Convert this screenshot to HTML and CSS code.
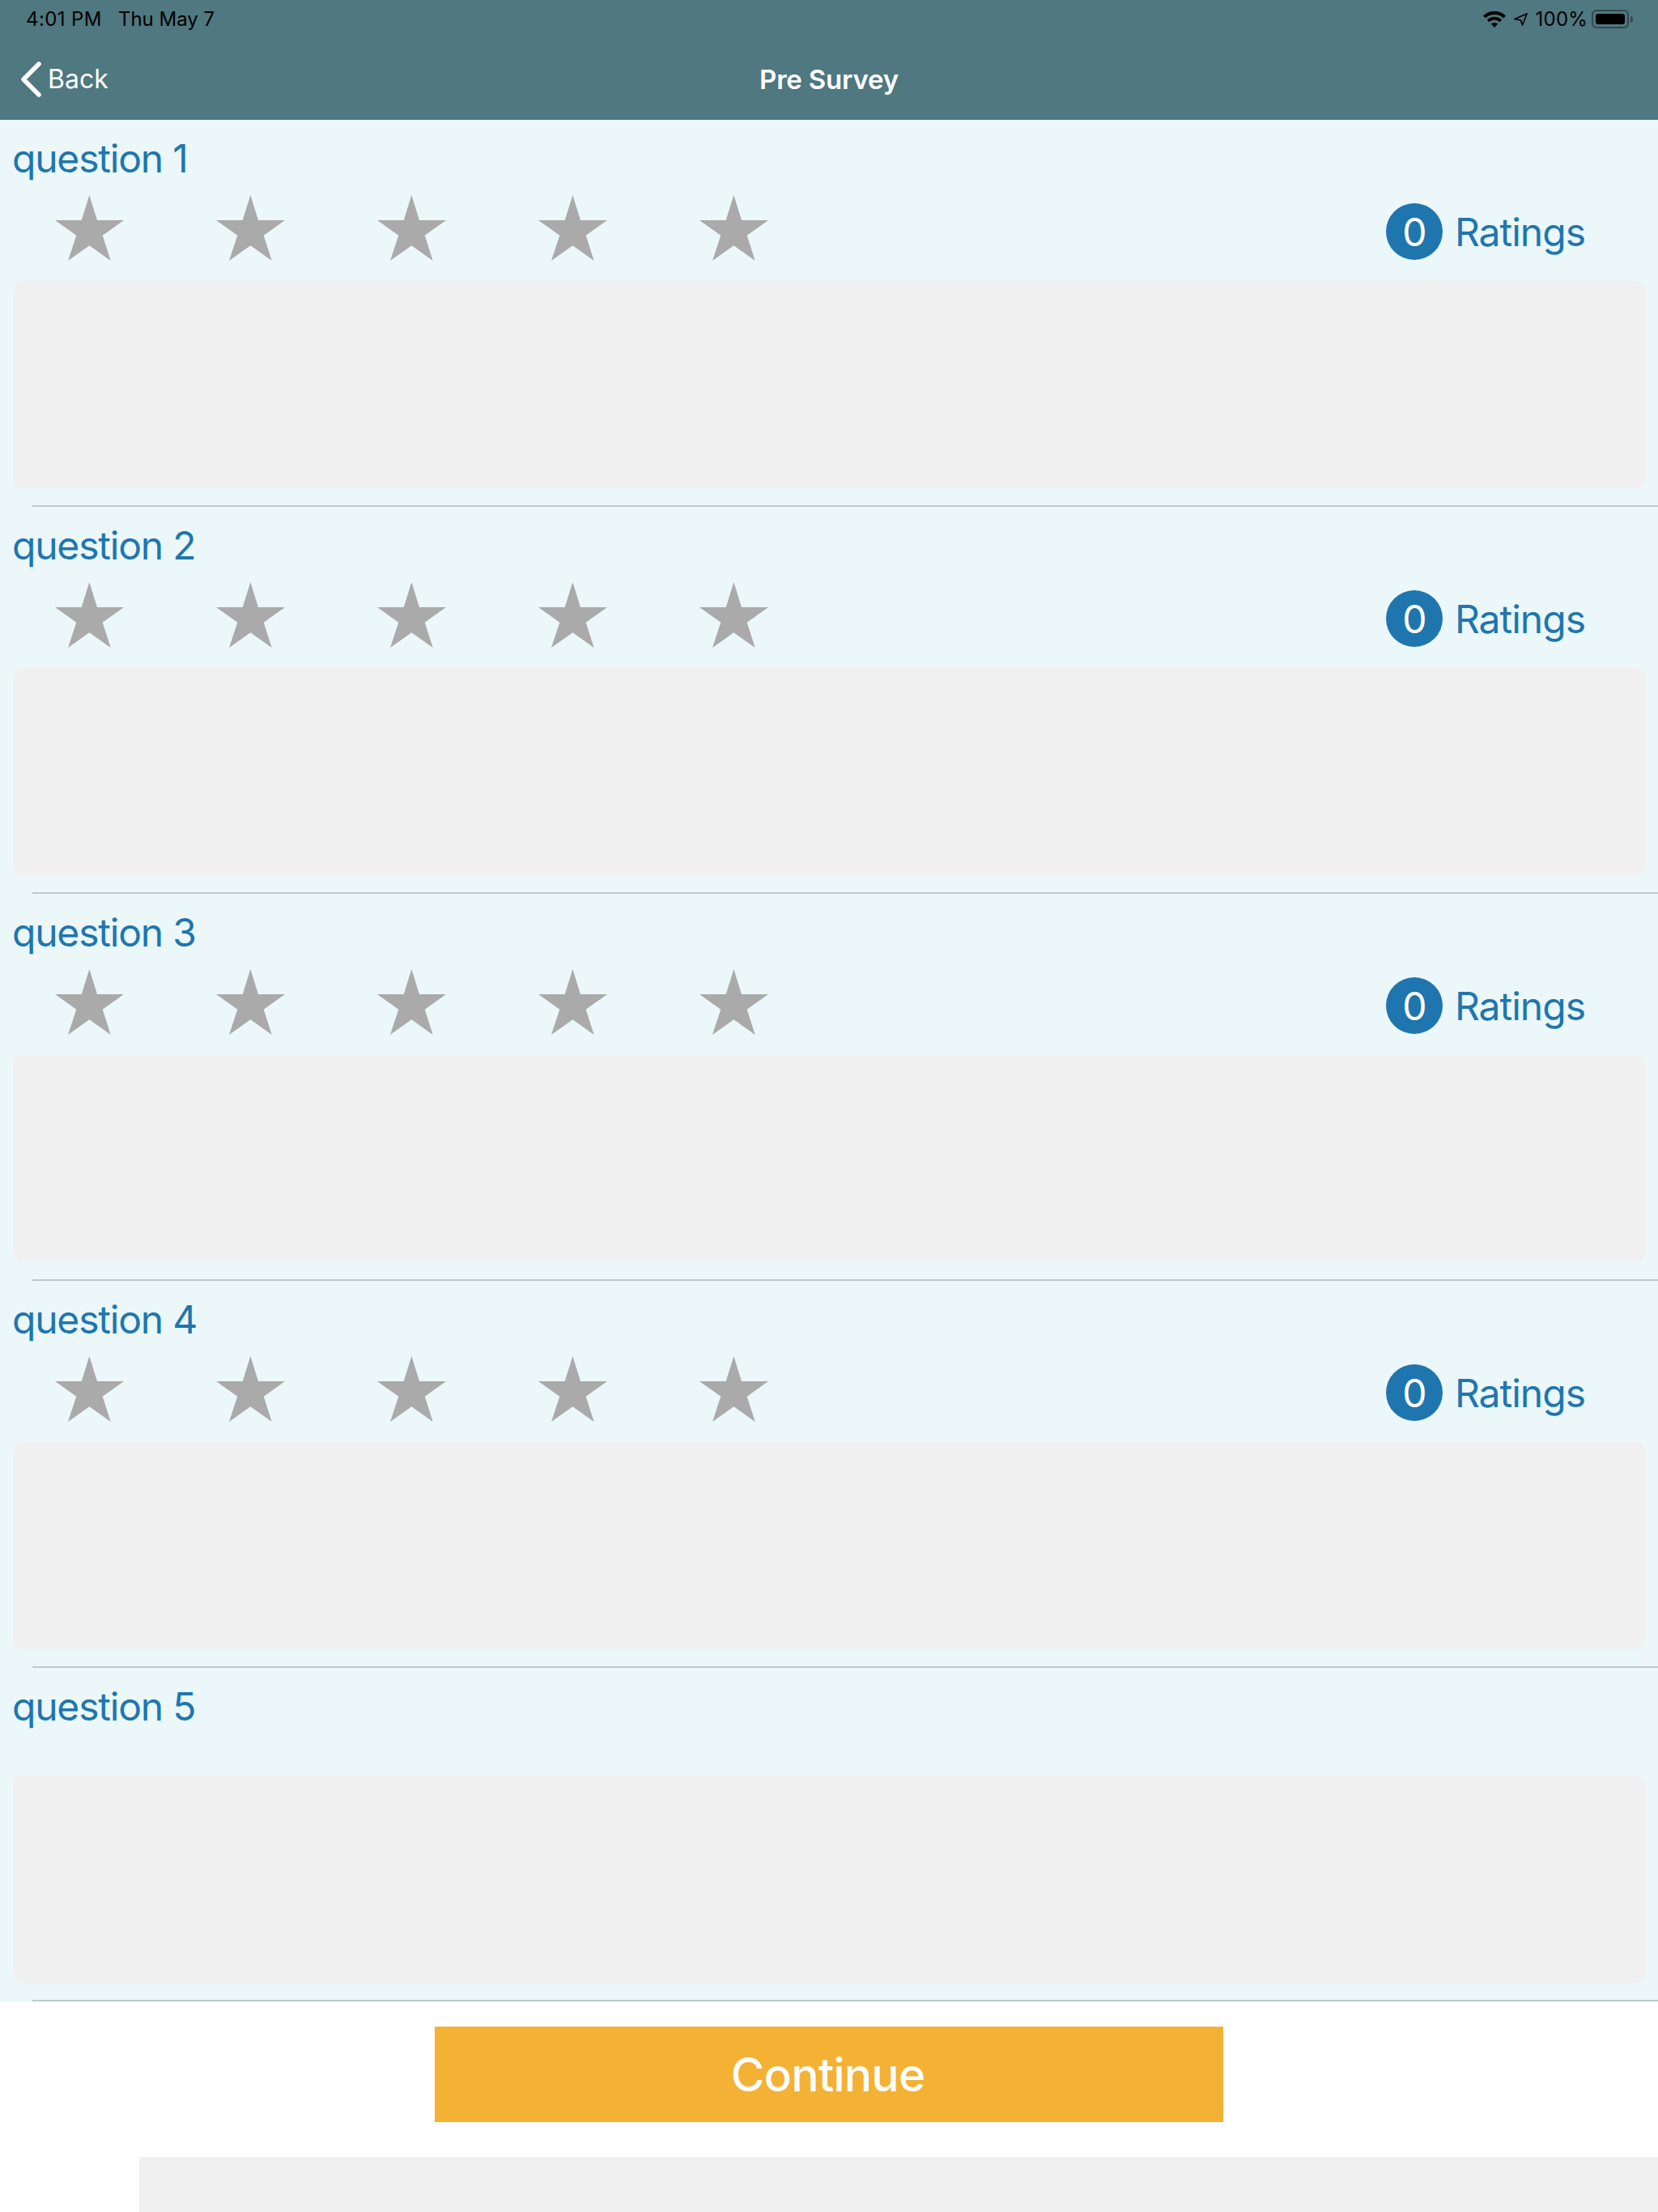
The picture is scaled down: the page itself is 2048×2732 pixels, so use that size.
FILE: index.html
```html
<!DOCTYPE html>
<html lang="en">

<head>
    <meta charset="UTF-8">
    <meta name="viewport" content="width=device-width, initial-scale=1.0">
    <title>Pre Survey</title>
    <link rel="stylesheet" href="styles.css">
</head>

<body>

    <svg class="sprites" width="0" height="0">
        <symbol id="star" viewBox="0 0 85 81">
            <polygon points="42.4,0 52,31 85,31 58.7,49.7 68.7,81 42.4,62.3 16,81 26.3,49.7 0,31 32.7,31"></polygon>
        </symbol>
    </svg>

    <header class="top-bar">
        <div class="status-bar">
            <div class="status-left">
                <span class="status-time">4:01 PM</span>
                <span>Thu May 7</span>
            </div>
            <div class="status-right">
                <svg class="wifi-icon" viewBox="0 0 28 20">
                    <path d="M14 20l-4.2-4.4a6 6 0 0 1 8.4 0z"></path>
                    <path d="M7.5 13.2l-2.6-2.7a13 13 0 0 1 18.2 0l-2.6 2.7a9.4 9.4 0 0 0-13 0z"></path>
                    <path d="M2.9 8.4L0 5.5a20 20 0 0 1 28 0l-2.900 2.900a16 16 0 0 0-22.200 0z"></path>
                </svg>
                <svg class="arrow-icon" viewBox="0 0 17 16">
                    <path d="M1 7.500L16 1l-5.500 14-2-6z"></path>
                </svg>
                <span class="battery-text">100%</span>
                <div class="battery">
                    <div class="battery-level"></div>
                </div>
                <div class="battery-nub"></div>
            </div>
        </div>
        <nav class="nav-bar">
            <a class="back-link">
                <svg class="back-icon" viewBox="0 0 26 44">
                    <path d="M23 3L4 22l19 19"></path>
                </svg>
                <span>Back</span>
            </a>
            <div class="nav-title">Pre Survey</div>
        </nav>
    </header>

    <main class="survey-list">
        <section class="question">
            <h2 class="question-title">question 1</h2>
            <div class="rating-row">
                <div class="stars">
                    <svg class="star"><use href="#star"></use></svg>
                    <svg class="star"><use href="#star"></use></svg>
                    <svg class="star"><use href="#star"></use></svg>
                    <svg class="star"><use href="#star"></use></svg>
                    <svg class="star"><use href="#star"></use></svg>
                </div>
                <div class="rating-count">
                    <span class="count-badge">0</span>
                    <span>Ratings</span>
                </div>
            </div>
            <div class="answer-box"></div>
        </section>
        <div class="divider"></div>

        <section class="question">
            <h2 class="question-title">question 2</h2>
            <div class="rating-row">
                <div class="stars">
                    <svg class="star"><use href="#star"></use></svg>
                    <svg class="star"><use href="#star"></use></svg>
                    <svg class="star"><use href="#star"></use></svg>
                    <svg class="star"><use href="#star"></use></svg>
                    <svg class="star"><use href="#star"></use></svg>
                </div>
                <div class="rating-count">
                    <span class="count-badge">0</span>
                    <span>Ratings</span>
                </div>
            </div>
            <div class="answer-box"></div>
        </section>
        <div class="divider"></div>

        <section class="question">
            <h2 class="question-title">question 3</h2>
            <div class="rating-row">
                <div class="stars">
                    <svg class="star"><use href="#star"></use></svg>
                    <svg class="star"><use href="#star"></use></svg>
                    <svg class="star"><use href="#star"></use></svg>
                    <svg class="star"><use href="#star"></use></svg>
                    <svg class="star"><use href="#star"></use></svg>
                </div>
                <div class="rating-count">
                    <span class="count-badge">0</span>
                    <span>Ratings</span>
                </div>
            </div>
            <div class="answer-box"></div>
        </section>
        <div class="divider"></div>

        <section class="question">
            <h2 class="question-title">question 4</h2>
            <div class="rating-row">
                <div class="stars">
                    <svg class="star"><use href="#star"></use></svg>
                    <svg class="star"><use href="#star"></use></svg>
                    <svg class="star"><use href="#star"></use></svg>
                    <svg class="star"><use href="#star"></use></svg>
                    <svg class="star"><use href="#star"></use></svg>
                </div>
                <div class="rating-count">
                    <span class="count-badge">0</span>
                    <span>Ratings</span>
                </div>
            </div>
            <div class="answer-box"></div>
        </section>
        <div class="divider"></div>

        <section class="question question-text-only">
            <h2 class="question-title">question 5</h2>
            <div class="answer-box"></div>
        </section>
        <div class="divider"></div>
    </main>

    <footer class="footer">
        <button class="continue-button">Continue</button>
        <div class="bottom-bar"></div>
    </footer>

</body>

</html>
```

FILE: styles.css
```css
/* Global Styling */
body {
    margin: 0;
    height: 2732px;
    overflow: hidden;
    background-color: #fff;
    font-family: 'Inter', 'Liberation Sans', sans-serif;
}

.sprites {
    position: absolute;
}

/* Top Bar */
.top-bar {
    height: 148px;
    background-color: #4f7880;
    color: #fff;
}

.status-bar {
    height: 40px;
    padding: 7px 31px 0 32px;
    box-sizing: border-box;
    display: flex;
    justify-content: space-between;
    align-items: center;
    color: #000;
    font-size: 24px;
}

.status-left {
    display: flex;
    gap: 20px;
}

.status-time {
    letter-spacing: 0.4px;
}

.status-right {
    display: flex;
    align-items: center;
}

.wifi-icon {
    width: 28px;
    height: 20px;
    margin-right: 10px;
}

.arrow-icon {
    width: 17px;
    height: 16px;
    margin-right: 10px;
    fill: none;
    stroke: #000;
    stroke-width: 1.6;
}

.battery-text {
    margin-right: 5px;
    letter-spacing: 0.2px;
}

.battery {
    width: 46px;
    height: 23px;
    padding: 3px;
    box-sizing: border-box;
    border: 2px solid #344a4f;
    border-radius: 6px;
}

.battery-level {
    height: 100%;
    background-color: #000;
    border-radius: 3px;
}

.battery-nub {
    width: 3px;
    height: 8px;
    margin-left: 2px;
    background-color: #344a4f;
    border-radius: 0 3px 3px 0;
}

.nav-bar {
    height: 108px;
    padding-top: 7px;
    box-sizing: border-box;
    display: grid;
    grid-template-columns: 1fr auto 1fr;
    align-items: center;
}

.back-link {
    display: flex;
    align-items: center;
    gap: 8px;
    padding-left: 25px;
    font-size: 32px;
}

.back-icon {
    width: 26px;
    height: 44px;
    fill: none;
    stroke: #fff;
    stroke-width: 5.5;
    stroke-linecap: round;
    stroke-linejoin: round;
}

.nav-title {
    font-size: 33px;
    font-weight: 600;
    letter-spacing: -0.2px;
}

/* Question List */
.survey-list {
    background-color: #ebf7f9;
}

.question {
    height: 476px;
    padding: 0 16px;
    box-sizing: border-box;
}

.question-text-only {
    height: 410px;
}

.question-title {
    margin: 0 0 0 -1px;
    height: 68px;
    padding-top: 28px;
    box-sizing: border-box;
    font-size: 48px;
    font-weight: 400;
    line-height: 40px;
    letter-spacing: -1.2px;
    color: #1f76ae;
}

.rating-row {
    height: 131px;
    display: flex;
    justify-content: space-between;
    align-items: center;
}

.stars {
    display: flex;
    gap: 114px;
    padding-left: 52px;
}

.star {
    width: 85px;
    height: 81px;
    fill: #aaa;
}

.rating-count {
    display: flex;
    align-items: center;
    gap: 15px;
    padding-top: 9px;
    padding-right: 74px;
    font-size: 48px;
    letter-spacing: -1px;
    color: #1f76ae;
}

.count-badge {
    width: 70px;
    height: 70px;
    display: flex;
    justify-content: center;
    align-items: center;
    background-color: #1f76ae;
    border-radius: 50%;
    color: #fff;
}

.answer-box {
    height: 256px;
    background-color: #f0f0f0;
    border-radius: 12px;
}

.question-text-only .answer-box {
    margin-top: 65px;
}

.divider {
    height: 2px;
    margin-left: 40px;
    background-color: #bccaca;
}

/* Footer */
.footer {
    padding-top: 31px;
    display: flex;
    flex-direction: column;
    align-items: center;
}

.continue-button {
    width: 974px;
    height: 118px;
    padding: 0 3px 0 0;
    background-color: #f4b235;
    border: none;
    color: #fff;
    font-family: inherit;
    font-size: 57px;
    font-weight: 500;
    letter-spacing: -0.8px;
}

.bottom-bar {
    align-self: stretch;
    height: 70px;
    margin-top: 43px;
    margin-left: 172px;
    background-color: #f0f0f0;
}
```
